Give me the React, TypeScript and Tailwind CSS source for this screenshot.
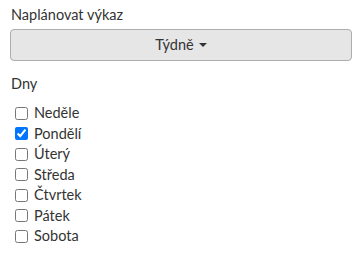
const days = [
  { name: "Neděle", checked: false },
  { name: "Pondělí", checked: true },
  { name: "Úterý", checked: false },
  { name: "Středa", checked: false },
  { name: "Čtvrtek", checked: false },
  { name: "Pátek", checked: false },
  { name: "Sobota", checked: false },
];

export default function App() {
  return (
    <div className="min-h-screen bg-white px-[10px] pt-[5px] text-[14.5px] text-[#333] font-['Lato',sans-serif]">
      <div className="mb-[13px]">
        <label className="block mb-[4px] pl-[1px] leading-[20px]">Naplánovat výkaz</label>
        <button
          type="button"
          className="w-full h-[32px] flex items-center justify-center gap-[5px] rounded-[4px] border border-[#adadad] bg-[#e6e6e6] text-[#333] leading-[20px]"
        >
          Týdně
          <span className="inline-block w-0 h-0 border-x-[4px] border-x-transparent border-t-[4px] border-t-[#333]" />
        </button>
      </div>
      <div>
        <label className="block mb-[9px] pl-[1px] leading-[20px]">Dny</label>
        <div className="flex flex-col pl-[5px]">
          {days.map((d) => (
            <label key={d.name} className="flex items-center h-[20.5px] leading-[20px]">
              <input type="checkbox" defaultChecked={d.checked} className="m-0 mr-[6px] w-[13px] h-[13px]" />
              {d.name}
            </label>
          ))}
        </div>
      </div>
    </div>
  );
}
